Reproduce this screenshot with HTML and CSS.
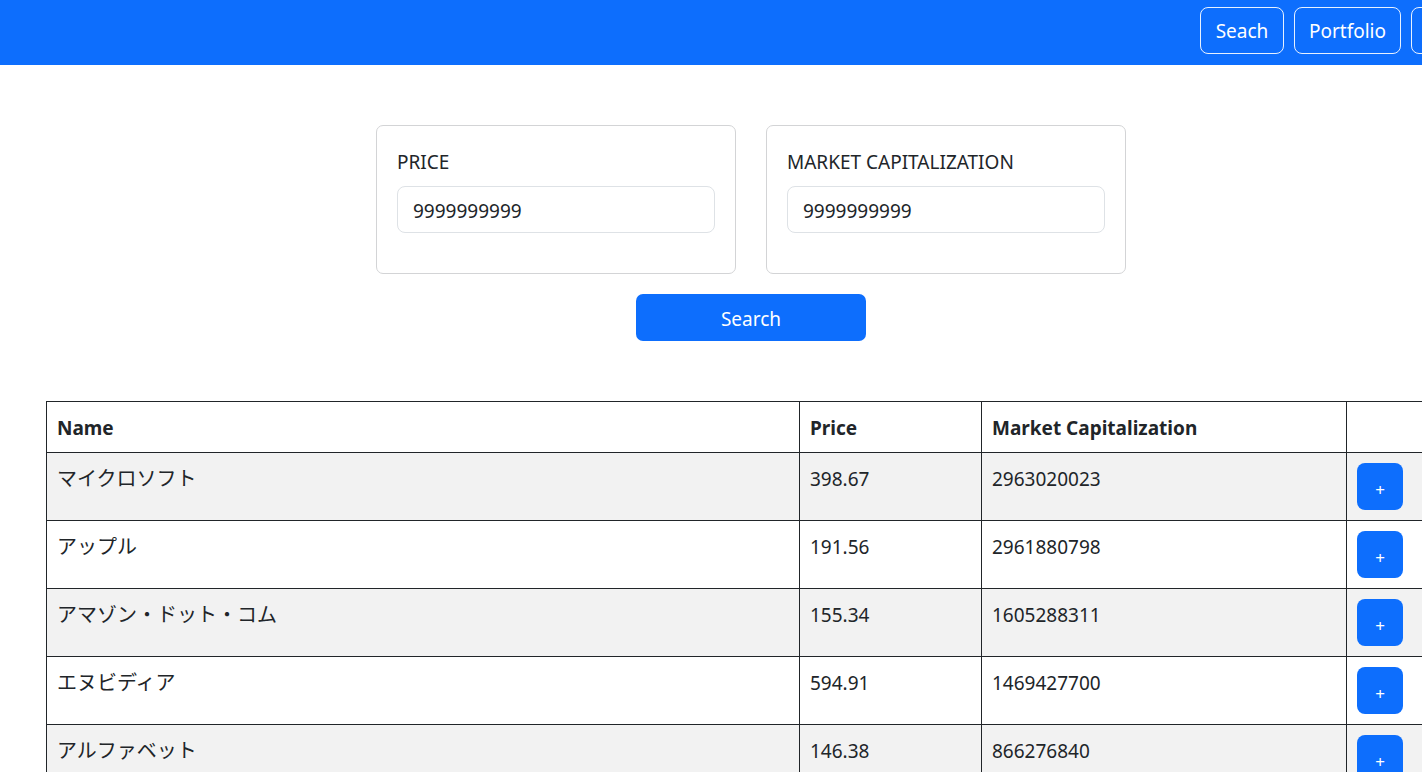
FILE: index.html
```html
<!DOCTYPE html>
<html lang="ja">
<head>
<meta charset="utf-8">
<title>Stock Search</title>
<link rel="stylesheet" href="styles.css">
</head>
<body>
<div class="page">
  <nav class="navbar">
    <button class="nav-btn nav-btn-seach">Seach</button>
    <button class="nav-btn nav-btn-portfolio">Portfolio</button>
    <button class="nav-btn nav-btn-logout">Logout</button>
  </nav>

  <main class="main">
    <section class="filters">
      <div class="filter-card">
        <label class="filter-label">PRICE</label>
        <input class="filter-input" type="text" value="9999999999">
      </div>
      <div class="filter-card">
        <label class="filter-label">MARKET CAPITALIZATION</label>
        <input class="filter-input" type="text" value="9999999999">
      </div>
    </section>
    <div class="search-row">
      <button class="search-btn">Search</button>
    </div>

    <table class="stock-table">
      <colgroup>
        <col class="col-name">
        <col class="col-price">
        <col class="col-cap">
        <col class="col-action">
      </colgroup>
      <thead>
        <tr><th>Name</th><th>Price</th><th>Market Capitalization</th><th></th></tr>
      </thead>
      <tbody>
        <tr><td>マイクロソフト</td><td>398.67</td><td>2963020023</td><td><button class="add-btn">+</button></td></tr>
        <tr><td>アップル</td><td>191.56</td><td>2961880798</td><td><button class="add-btn">+</button></td></tr>
        <tr><td>アマゾン・ドット・コム</td><td>155.34</td><td>1605288311</td><td><button class="add-btn">+</button></td></tr>
        <tr><td>エヌビディア</td><td>594.91</td><td>1469427700</td><td><button class="add-btn">+</button></td></tr>
        <tr><td>アルファベット</td><td>146.38</td><td>866276840</td><td><button class="add-btn">+</button></td></tr>
        <tr><td>メタ・プラットフォームズ</td><td>402.19</td><td>1031270000</td><td><button class="add-btn">+</button></td></tr>
      </tbody>
    </table>
  </main>
</div>
</body>
</html>
```

FILE: styles.css
```css
html, body {
  margin: 0;
  padding: 0;
  overflow: hidden;
  background: #fff;
}

body {
  font-family: "Noto Sans", "Noto Sans CJK JP", sans-serif;
  font-size: 20px;
  line-height: 1.5;
  color: #212529;
}

.page {
  width: 1522px;
}

.navbar {
  height: 65px;
  box-sizing: border-box;
  background: #0d6efd;
  display: flex;
  justify-content: flex-end;
  align-items: flex-start;
  gap: 10px;
  padding: 7px 11px 0 0;
}

.nav-btn {
  font-family: inherit;
  font-size: 19px;
  line-height: 1.5;
  color: #fff;
  background: transparent;
  border: 1px solid rgba(255, 255, 255, 0.9);
  border-radius: 8px;
  height: 47px;
  padding: 2px 0 0;
  box-sizing: border-box;
}

.nav-btn-seach { width: 84px; }
.nav-btn-portfolio { width: 107px; }
.nav-btn-logout { width: 100px; }

.main {
  padding-top: 60px;
  width: 1502px;
}

.filters {
  display: flex;
  justify-content: center;
  gap: 30px;
}

.filter-card {
  width: 360px;
  box-sizing: border-box;
  border: 1px solid #d3d4d6;
  border-radius: 7px;
  padding: 20px 20px 40px;
  display: flex;
  flex-direction: column;
}

.filter-label {
  font-size: 19px;
  line-height: 30px;
  height: 30px;
  padding-top: 1px;
  box-sizing: border-box;
  margin-bottom: 10px;
  color: #212529;
}

.filter-input {
  font-family: inherit;
  font-size: 19px;
  color: #212529;
  height: 47px;
  box-sizing: border-box;
  border: 1px solid #dee2e6;
  border-radius: 8px;
  padding: 2px 15px 0;
  outline: none;
}

.search-row {
  display: flex;
  justify-content: center;
  margin-top: 20px;
}

.search-btn {
  width: 230px;
  height: 47px;
  border: none;
  border-radius: 7px;
  background: #0d6efd;
  color: #fff;
  font-family: inherit;
  font-size: 19px;
  padding: 2px 0 0;
}

.stock-table {
  margin: 60px 0 0 46px;
  border-collapse: collapse;
  table-layout: fixed;
  width: 1410px;
}

.col-name { width: 753px; }
.col-price { width: 182px; }
.col-cap { width: 365px; }
.col-action { width: 110px; }

.stock-table th,
.stock-table td {
  border: 1px solid #212529;
  padding: 11px 10px 9px;
  text-align: left;
  vertical-align: top;
  line-height: 30px;
  font-size: 19px;
}

.stock-table td:last-child {
  padding-top: 10px;
  padding-bottom: 10px;
}

.stock-table td:first-child {
  font-size: 20px;
}

.stock-table th {
  font-weight: 700;
}

.stock-table tbody tr:nth-child(odd) td {
  background: #f2f2f2;
}

.add-btn {
  width: 46px;
  height: 47px;
  border: none;
  border-radius: 8px;
  background: #0d6efd;
  color: #fff;
  font-family: inherit;
  font-size: 17px;
  padding: 6px 0 0;
  display: block;
}
```
